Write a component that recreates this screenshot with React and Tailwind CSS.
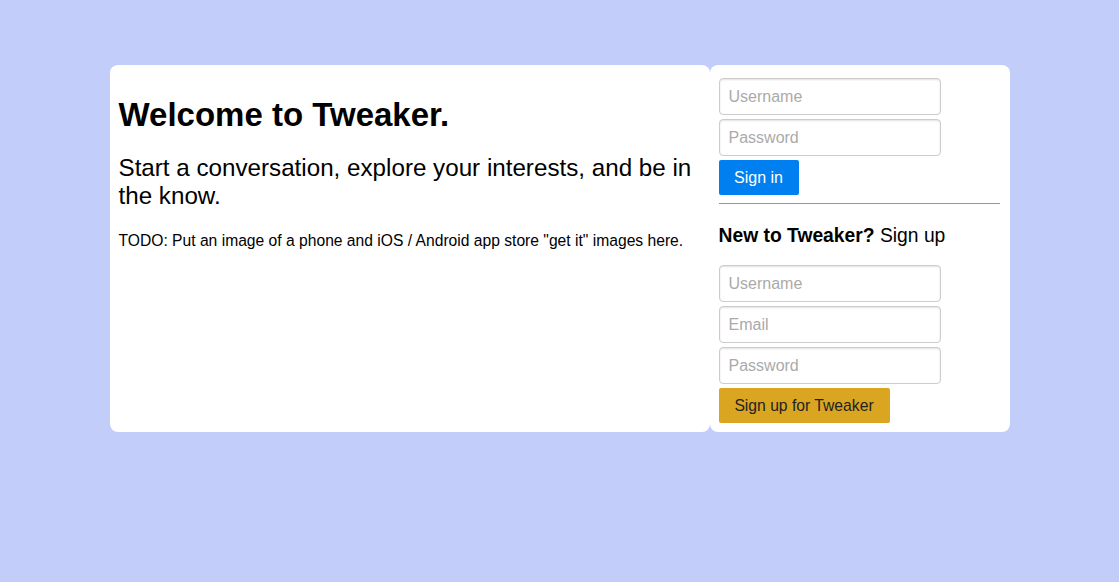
import React from 'react';

const Field = ({ placeholder, type = 'text' }) => (
  <input
    type={type}
    placeholder={placeholder}
    className="block w-[222px] h-[37px] px-[9px] rounded-[4px] border border-[#ccc] bg-white text-[16px] text-black placeholder:text-[#aaa] shadow-[inset_0_1px_2px_rgba(0,0,0,0.12)] outline-none"
  />
);

export default function App() {
  return (
    <div
      className="min-h-[582px] bg-[#c3cdf9] flex justify-center pt-[65px]"
      style={{ fontFamily: '"Liberation Sans", Arial, sans-serif' }}
    >
      <div className="flex h-[367px]">
        {/* Welcome panel */}
        <div className="w-[600px] bg-white rounded-[8px] px-[9px] pt-[31px]">
          <h1 className="text-[33px] leading-[37px] font-bold text-black">Welcome to Tweaker.</h1>
          <h2 className="mt-[21px] text-[24.2px] leading-[28px] text-black">
            Start a conversation, explore your interests, and be in the know.
          </h2>
          <p className="mt-[22px] text-[15.65px] leading-[18px] text-black">
            TODO: Put an image of a phone and iOS / Android app store "get it" images here.
          </p>
        </div>

        {/* Auth panel */}
        <div className="w-[300px] bg-white rounded-[8px] pl-[9px] pr-[10px] pt-[13px]">
          <form className="flex flex-col gap-[4px]">
            <Field placeholder="Username" />
            <Field placeholder="Password" type="password" />
            <button
              type="button"
              className="self-start h-[35px] w-[80px] rounded-[2px] bg-[#0080f0] text-white text-[16px]"
            >
              Sign in
            </button>
          </form>
          <hr className="mt-[8px] border-0 h-px bg-[#999]" />
          <h3 className="mt-[21px] text-[19.3px] leading-[22px] text-black">
            <span className="font-bold">New to Tweaker?</span> Sign up
          </h3>
          <form className="mt-[18px] flex flex-col gap-[4px]">
            <Field placeholder="Username" />
            <Field placeholder="Email" type="email" />
            <Field placeholder="Password" type="password" />
            <button
              type="button"
              className="self-start h-[35px] w-[171px] rounded-[2px] bg-[#daa520] text-[#222] text-[15.7px]"
            >
              Sign up for Tweaker
            </button>
          </form>
        </div>
      </div>
    </div>
  );
}
